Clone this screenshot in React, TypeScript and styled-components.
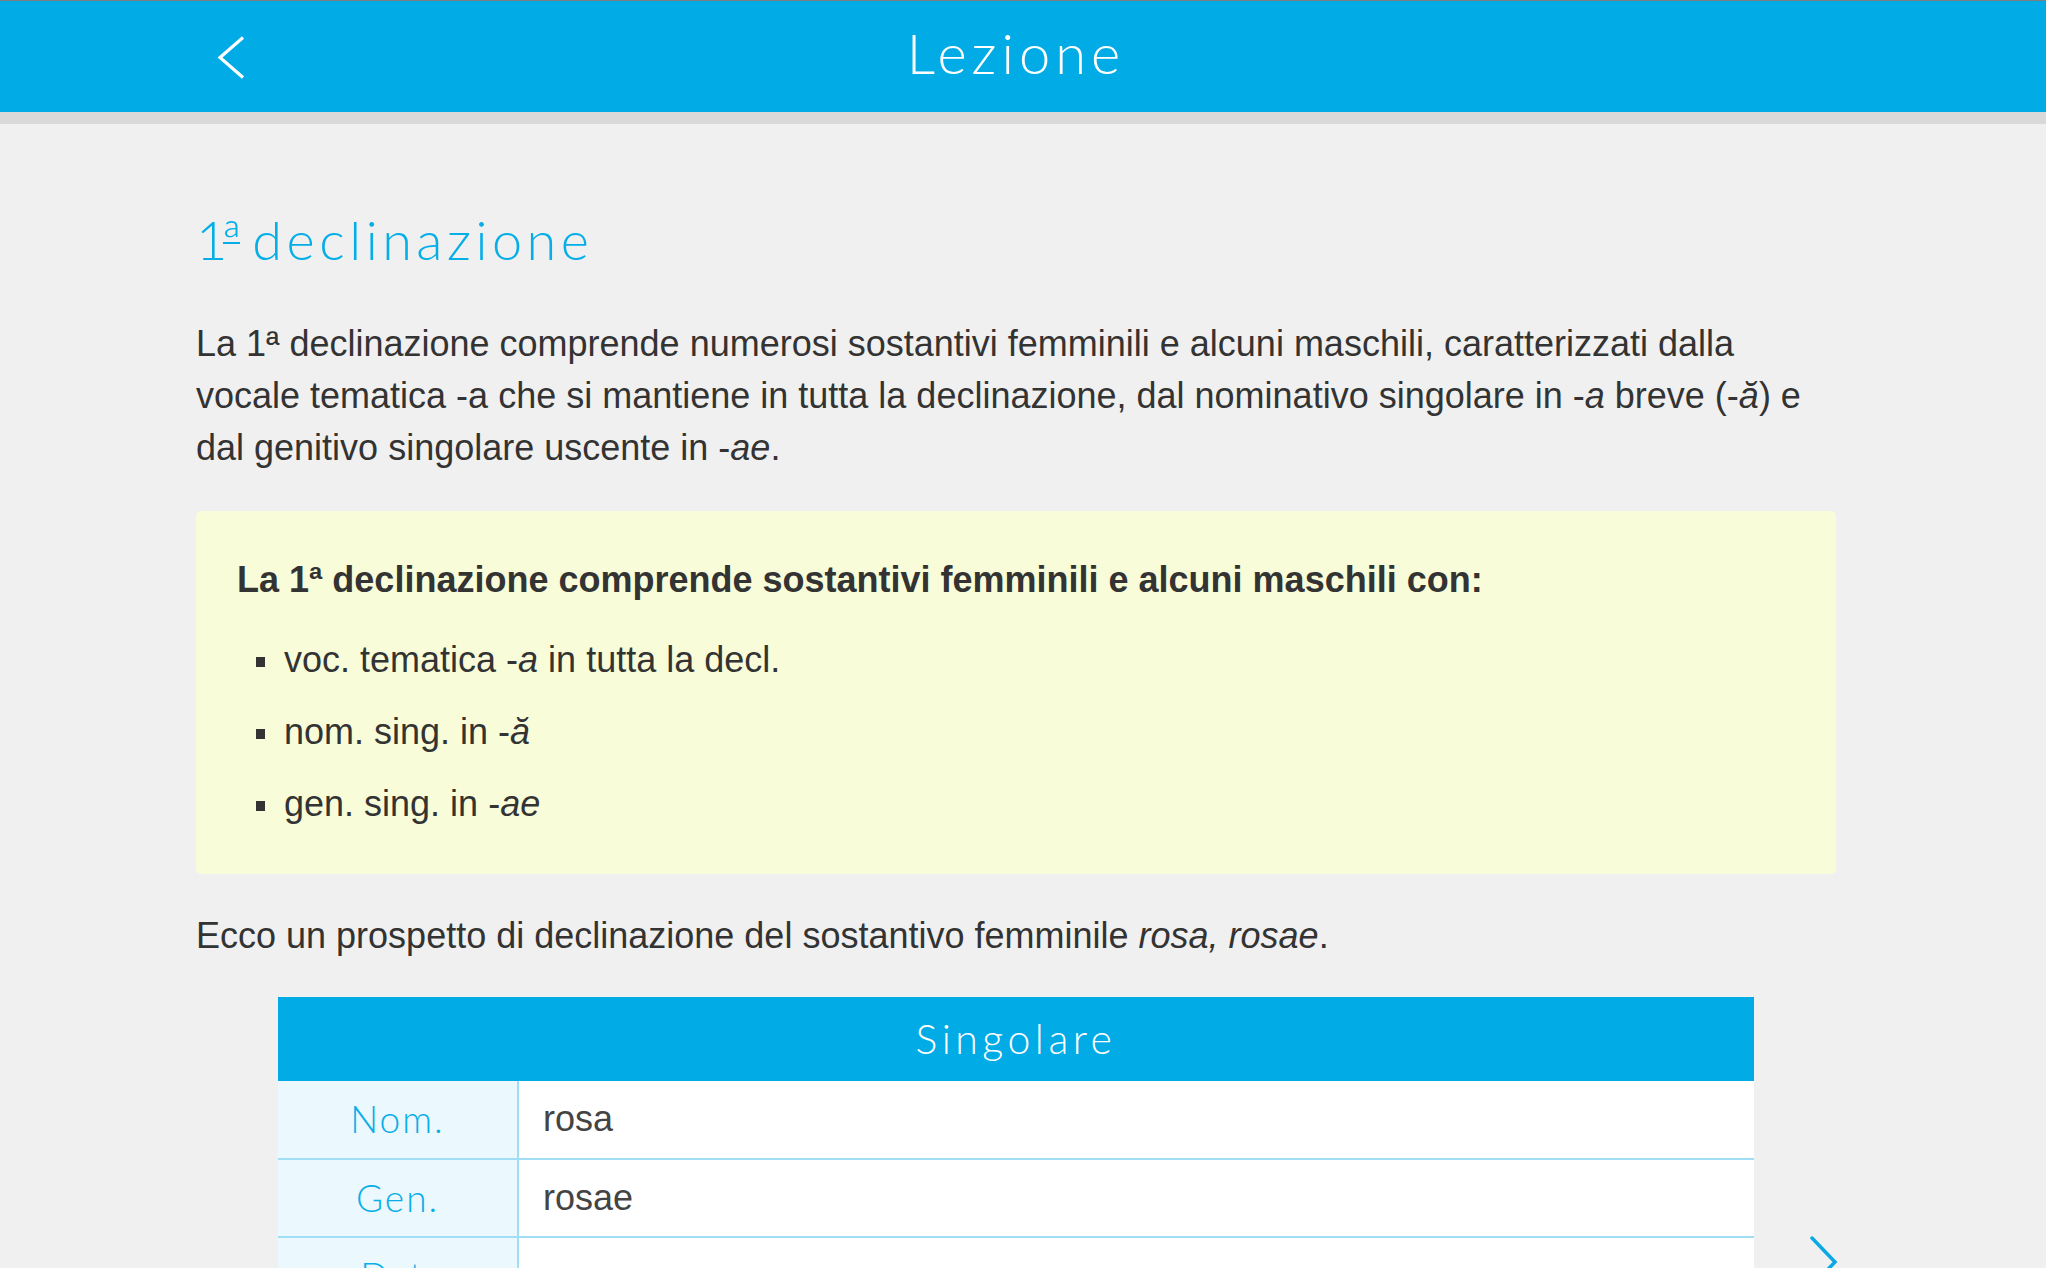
import React from "react";
import styled, { createGlobalStyle } from "styled-components";

const GlobalStyle = createGlobalStyle`
  html, body {
    margin: 0;
    padding: 0;
    overflow: hidden;
    background: #f0f0f0;
  }
  body {
    font-family: "Liberation Sans", Arial, sans-serif;
    color: #333333;
  }
  * { box-sizing: border-box; }
`;

const Page = styled.div`
  height: 100vh;
  overflow: hidden;
  display: flex;
  flex-direction: column;
  border-top: 1px solid #7d7d7d;
`;

const TopBar = styled.header`
  flex: none;
  height: 111px;
  background: #00abe6;
  display: grid;
  grid-template-columns: 1fr auto 1fr;
  align-items: center;
  padding: 0 210px 0 196px;
`;

const BackButton = styled.button`
  justify-self: start;
  margin-left: 20px;
  width: 32px;
  height: 48px;
  padding: 0;
  border: 0;
  background: transparent;
  display: flex;
  cursor: pointer;
`;

const Title = styled.h1`
  margin: 0 0 8px 0;
  font-family: "Lato", sans-serif;
  font-weight: 300;
  font-size: 56px;
  line-height: 1.2;
  letter-spacing: 5px;
  color: #ffffff;
`;

const Shadow = styled.div`
  flex: none;
  height: 12px;
  background: #d9d9d9;
`;

const Content = styled.main`
  flex: 1;
  padding: 0 210px 0 196px;
`;

const Heading = styled.h2`
  margin: 84px 0 0 0;
  font-family: "Lato", sans-serif;
  font-weight: 300;
  font-size: 54px;
  line-height: 1.2;
  letter-spacing: 4.5px;
  color: #06aee8;
`;

const Ordinal = styled.span`
  position: relative;
  margin: 0 -13px 0 -10px;

  &::after {
    content: "";
    position: absolute;
    left: 1px;
    right: 6px;
    bottom: 28px;
    height: 2px;
    background: #06aee8;
  }
`;

const Paragraph = styled.p<{ $top: number }>`
  margin: ${(p) => p.$top}px 0 0 0;
  font-size: 36px;
  line-height: 52px;
  color: #333333;
`;

const NoteBox = styled.section`
  margin-top: 37px;
  background: #f8fcd9;
  border-radius: 5px;
  padding: 43px 40px 34px 41px;
`;

const NoteTitle = styled.p`
  margin: 0;
  font-size: 36px;
  line-height: 52px;
  font-weight: 700;
  color: #333333;
`;

const NoteList = styled.ul`
  margin: 18px 0 0 0;
  padding: 0;
  list-style: none;
`;

const NoteItem = styled.li`
  display: flex;
  align-items: center;
  font-size: 36px;
  line-height: 72px;
  color: #333333;
  padding-left: 19px;

  &::before {
    content: "";
    flex: none;
    width: 9px;
    height: 10px;
    margin: 4px 19px 0 0;
    background: #333333;
  }
`;

const Table = styled.table`
  margin: 35px 82px 0 82px;
  width: calc(100% - 164px);
  border-collapse: collapse;
`;

const HeadCell = styled.th`
  height: 84px;
  padding: 0;
  background: #00abe6;
  color: #ffffff;
  font-family: "Lato", sans-serif;
  font-weight: 300;
  font-size: 41px;
  letter-spacing: 4.5px;
  text-align: center;
`;

const Row = styled.tr`
  border-bottom: 2px solid #9fdef5;
`;

const CaseCell = styled.td`
  width: 240px;
  height: 78px;
  padding: 0;
  background: #ebf8fd;
  border-right: 2px solid #9fdef5;
  font-family: "Lato", sans-serif;
  font-weight: 300;
  font-size: 37px;
  line-height: 1.2;
  letter-spacing: 2px;
  color: #08aee8;
  text-align: center;
  vertical-align: middle;
`;

const FormCell = styled.td`
  height: 78px;
  padding: 0 0 0 24px;
  background: #ffffff;
  font-size: 36px;
  color: #444444;
  vertical-align: middle;
`;

const NextButton = styled.button`
  position: fixed;
  top: 1236px;
  left: 1806px;
  width: 34px;
  height: 52px;
  padding: 0;
  border: 0;
  background: transparent;
  display: flex;
  cursor: pointer;
`;

const rows: [string, string][] = [
  ["Nom.", "rosa"],
  ["Gen.", "rosae"],
  ["Dat.", "rosae"],
  ["Acc.", "rosam"],
  ["Voc.", "rosa"],
  ["Abl.", "rosā"],
];

export default function App() {
  return (
    <>
      <GlobalStyle />
      <Page>
        <TopBar>
          <BackButton aria-label="Indietro">
            <svg width="32" height="48" viewBox="0 0 32 48">
              <polyline
                points="27,4.5 4,24.5 27,44.5"
                fill="none"
                stroke="#ffffff"
                strokeWidth="3.2"
                strokeLinejoin="miter"
              />
            </svg>
          </BackButton>
          <Title>Lezione</Title>
          <div />
        </TopBar>
        <Shadow />
        <Content>
          <Heading>
            1<Ordinal>ª</Ordinal> declinazione
          </Heading>
          <Paragraph $top={45}>
            La 1ª declinazione comprende numerosi sostantivi femminili e alcuni
            maschili, caratterizzati dalla vocale tematica -a che si mantiene in
            tutta la declinazione, dal nominativo singolare in -<i>a</i> breve
            (-<i>ă</i>) e dal genitivo singolare uscente in -<i>ae</i>.
          </Paragraph>
          <NoteBox>
            <NoteTitle>
              La 1ª declinazione comprende sostantivi femminili e alcuni
              maschili con:
            </NoteTitle>
            <NoteList>
              <NoteItem>
                <span>
                  voc. tematica -<i>a</i> in tutta la decl.
                </span>
              </NoteItem>
              <NoteItem>
                <span>
                  nom. sing. in -<i>ă</i>
                </span>
              </NoteItem>
              <NoteItem>
                <span>
                  gen. sing. in -<i>ae</i>
                </span>
              </NoteItem>
            </NoteList>
          </NoteBox>
          <Paragraph $top={36}>
            Ecco un prospetto di declinazione del sostantivo femminile{" "}
            <i>rosa, rosae</i>.
          </Paragraph>
          <Table>
            <thead>
              <tr>
                <HeadCell colSpan={2}>Singolare</HeadCell>
              </tr>
            </thead>
            <tbody>
              {rows.map(([c, f]) => (
                <Row key={c}>
                  <CaseCell>{c}</CaseCell>
                  <FormCell>{f}</FormCell>
                </Row>
              ))}
            </tbody>
          </Table>
        </Content>
        <NextButton aria-label="Avanti">
          <svg width="34" height="52" viewBox="0 0 34 52">
            <polyline
              points="6,2 29,26 6,50"
              fill="none"
              stroke="#0aa9e3"
              strokeWidth="3.5"
              strokeLinecap="round"
            />
          </svg>
        </NextButton>
      </Page>
    </>
  );
}
